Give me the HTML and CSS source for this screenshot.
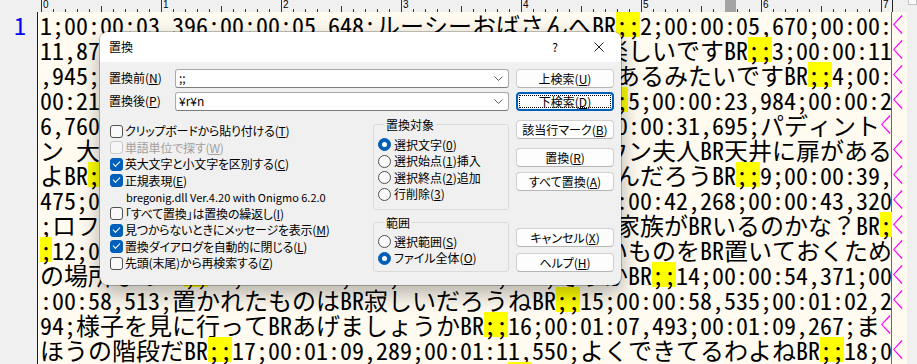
FILE: index.html
```html
<!DOCTYPE html>
<html lang="ja">
<head>
  <meta charset="UTF-8">
  <title>置換</title>
  <link rel="stylesheet" href="styles.css">
</head>
<body>
  <div class="window">
    <div class="ruler-row">
      <div class="ruler-gutter"></div>
      <div class="ruler">
        <span class="ruler-num">0</span>
        <span class="ruler-num">1</span>
        <span class="ruler-num">2</span>
        <span class="ruler-num">3</span>
        <span class="ruler-num">4</span>
        <span class="ruler-num">5</span>
        <span class="ruler-num">6</span>
        <span class="ruler-num">7</span>
        <span class="ruler-cursor"></span>
      </div>
      <div class="ruler-rest"><span class="scroll-cap"></span></div>
    </div>

    <div class="edit-row">
      <div class="gutter">1</div>
      <div class="text">
        <div class="line">1;00:00:03,396;00:00:05,648;ルーシーおばさんへBR<span class="hl">;;</span>2;00:00:05,670;00:00:<span class="wrap"></span></div>
        <div class="line">11,875;ロンドンの暮らしはブラウンさん一家といて楽しいですBR<span class="hl">;;</span>3;00:00:11<span class="wrap"></span></div>
        <div class="line">,945;00:00:14,118;この家には秘密の部屋がたくさんあるみたいですBR<span class="hl">;;</span>4;00:<span class="wrap"></span></div>
        <div class="line">00:21,453;00:00:22,870;屋根裏に何があるのかなBR<span class="hl">;;</span>5;00:00:23,984;00:00:2<span class="wrap"></span></div>
        <div class="line">6,760;屋根裏へ行ってみようよBR<span class="hl">;;</span>6;00:00:28,112;00:00:31,695;パディント<span class="wrap"></span></div>
        <div class="line">ン 大きいねBR<span class="hl">;;</span>7;00:00:32,100;00:00:35,420;ブラウン夫人BR天井に扉がある<span class="wrap"></span></div>
        <div class="line">よBR<span class="hl">;;</span>8;00:00:35,500;00:00:38,990;上には何があるんだろうBR<span class="hl">;;</span>9;00:00:39,<span class="wrap"></span></div>
        <div class="line">475;00:00:41,200;ここから屋根裏に行けるBR<span class="hl">;;</span>10;00:00:42,268;00:00:43,320<span class="wrap"></span></div>
        <div class="line">;ロフトには もしかしたら小さなネズミさんの仲間の家族がBRいるのかな？BR<span class="hl">;</span><span class="wrap"></span></div>
        <div class="line"><span class="hl">;</span>12;00:00:46,100;00:00:50,300;屋根裏は 使ってないものをBR置いておくため<span class="wrap"></span></div>
        <div class="line">の場所なのBR<span class="hl">;;</span>13;00:00:50,500;00:00:53,900;そうかBR<span class="hl">;;</span>14;00:00:54,371;00<span class="wrap"></span></div>
        <div class="line">:00:58,513;置かれたものはBR寂しいだろうねBR<span class="hl">;;</span>15;00:00:58,535;00:01:02,2<span class="wrap"></span></div>
        <div class="line">94;様子を見に行ってBRあげましょうかBR<span class="hl">;;</span>16;00:01:07,493;00:01:09,267;ま<span class="wrap"></span></div>
        <div class="line">ほうの階段だBR<span class="hl">;;</span>17;00:01:09,289;00:01:11,550;よくできてるわよねBR<span class="hl">;;</span>18;0<span class="wrap"></span></div>
        <div class="line">0:01:12,001;00:01:14,010;ありがとうねBR<span class="hl">;;</span>19;00:01:14,500;00:01:16,800;<span class="wrap"></span></div>
      </div>
      <div class="vscroll"></div>
    </div>

    <div class="dialog">
      <div class="titlebar">
        <span class="title">置換</span>
        <span class="title-btn">?</span>
        <span class="title-btn">
          <svg width="10" height="10" viewBox="0 0 10 10"><path d="M0.5 0.5L9.5 9.5M9.5 0.5L0.5 9.5" stroke="#1a1a1a" stroke-width="1" fill="none"/></svg>
        </span>
      </div>

      <div class="dialog-body">
        <div class="main">
          <div class="field">
            <span class="field-label">置換前(<u>N</u>)</span>
            <div class="combo">
              <span class="combo-value">;;</span>
              <svg width="9" height="5" viewBox="0 0 9 5"><path d="M0.5 0.5L4.5 4.5L8.5 0.5" stroke="#5c5c5c" fill="none"/></svg>
            </div>
          </div>
          <div class="field">
            <span class="field-label">置換後(<u>P</u>)</span>
            <div class="combo">
              <span class="combo-value">¥r¥n</span>
              <svg width="9" height="5" viewBox="0 0 9 5"><path d="M0.5 0.5L4.5 4.5L8.5 0.5" stroke="#5c5c5c" fill="none"/></svg>
            </div>
          </div>

          <div class="options">
            <div class="checks">
              <div class="check"><span class="box"></span>クリップボードから貼り付ける(<u>T</u>)</div>
              <div class="check disabled"><span class="box"></span>単語単位で探す(<u>W</u>)</div>
              <div class="check"><span class="box on"></span>英大文字と小文字を区別する(<u>C</u>)</div>
              <div class="check"><span class="box on"></span>正規表現(<u>E</u>)</div>
              <div class="check note">bregonig.dll Ver.4.20 with Onigmo 6.2.0</div>
              <div class="check"><span class="box"></span>「すべて置換」は置換の繰返し(<u>I</u>)</div>
              <div class="check"><span class="box on"></span>見つからないときにメッセージを表示(<u>M</u>)</div>
              <div class="check"><span class="box on"></span>置換ダイアログを自動的に閉じる(<u>L</u>)</div>
              <div class="check"><span class="box"></span>先頭(末尾)から再検索する(<u>Z</u>)</div>
            </div>

            <div class="groups">
              <fieldset class="group">
                <legend>置換対象</legend>
                <div class="radio-row"><span class="radio on"></span>選択文字(<u>0</u>)</div>
                <div class="radio-row"><span class="radio"></span>選択始点(<u>1</u>)挿入</div>
                <div class="radio-row"><span class="radio"></span>選択終点(<u>2</u>)追加</div>
                <div class="radio-row"><span class="radio"></span>行削除(<u>3</u>)</div>
              </fieldset>
              <fieldset class="group group-range">
                <legend>範囲</legend>
                <div class="radio-row"><span class="radio"></span>選択範囲(<u>S</u>)</div>
                <div class="radio-row"><span class="radio on"></span>ファイル全体(<u>O</u>)</div>
              </fieldset>
            </div>
          </div>
        </div>

        <div class="side">
          <div class="btn">上検索(<u>U</u>)</div>
          <div class="btn focused gap-4">下検索(<u>D</u>)</div>
          <div class="btn gap-9">該当行マーク(<u>B</u>)</div>
          <div class="btn gap-9">置換(<u>R</u>)</div>
          <div class="btn gap-5">すべて置換(<u>A</u>)</div>
          <div class="btn gap-37">キャンセル(<u>X</u>)</div>
          <div class="btn gap-6">ヘルプ(<u>H</u>)</div>
        </div>
      </div>
    </div>
  </div>
</body>
</html>
```

FILE: styles.css
```css
body {
  margin: 0;
  background: #f0f0f0;
}

.window {
  position: relative;
  width: 917px;
  height: 364px;
  overflow: hidden;
  background: #f0f0f0;
}

/* ruler */
.ruler-row {
  display: flex;
  height: 12px;
}

.ruler-gutter {
  width: 41px;
}

.ruler {
  position: relative;
  display: flex;
  width: 851px;
  overflow: hidden;
  border-right: 1px solid #222;
  background:
    repeating-linear-gradient(to right, #333 0 1px, transparent 1px 120px) 0 0 / 100% 100% no-repeat,
    repeating-linear-gradient(to right, transparent 0 60px, #333 60px 61px, transparent 61px 120px) 0 100% / 100% 6px no-repeat,
    repeating-linear-gradient(to right, #333 0 1px, transparent 1px 12px) 0 100% / 100% 3px no-repeat;
}

.ruler-num {
  flex: none;
  width: 120px;
  padding-left: 2px;
  box-sizing: border-box;
  font: 10px/10px "Liberation Sans", sans-serif;
  color: #000;
}

.ruler-cursor {
  position: absolute;
  left: 684px;
  top: 0;
  width: 11px;
  height: 12px;
  background: #a4a4a4;
}

.ruler-rest {
  flex: 1;
  position: relative;
}

.scroll-cap {
  position: absolute;
  right: 0;
  top: 0;
  width: 7px;
  height: 4px;
  background: #fbfbfb;
  border: 1px solid #c4c4c4;
  border-top: 0;
}

/* editor */
.edit-row {
  display: flex;
  height: 352px;
}

.gutter {
  width: 38px;
  box-sizing: border-box;
  padding-right: 11px;
  border-right: 1px solid #0000ff;
  text-align: right;
  color: #0000ff;
  font: 24px/25px "Noto Sans Mono CJK JP", "Noto Sans CJK JP", monospace;
}

.text {
  width: 869px;
  box-sizing: border-box;
  padding-left: 2px;
  overflow: hidden;
  background: linear-gradient(#ff00ff, #ff00ff) 853px 0 / 1px 100% no-repeat, #fffbf0;
  color: #000;
  font: 24px/25px "Noto Sans Mono CJK JP", "Noto Sans CJK JP", monospace;
}

.line {
  height: 25px;
  white-space: pre;
}

.hl {
  display: inline-block;
  height: 25px;
  vertical-align: top;
  background: #ffff00;
}

.wrap {
  display: inline-block;
  width: 12px;
  height: 25px;
  vertical-align: top;
  background: #ff00ff;
  clip-path: polygon(9.6px 3px, 10.6px 4px, 2.4px 12.5px, 10.6px 21px, 9.6px 22px, 1px 12.5px);
}

.vscroll {
  flex: 1;
  background: #f0f0f0;
}

/* dialog */
.dialog {
  position: absolute;
  left: 100px;
  top: 32px;
  width: 521px;
  height: 253px;
  overflow: hidden;
  background: #f0f0f0;
  border-radius: 8px;
  box-shadow: 0 0 0 1px rgba(0, 0, 0, 0.22), 0 8px 22px rgba(0, 0, 0, 0.32);
  color: #000;
  font: 12px/16.5px "Noto Sans CJK JP", sans-serif;
  font-feature-settings: "palt";
}

.titlebar {
  display: flex;
  align-items: center;
  height: 30px;
  padding-left: 9px;
  background: #fff;
}

.title {
  flex: 1;
}

.title-btn {
  display: flex;
  justify-content: center;
  align-items: center;
  width: 44px;
  font-size: 12px;
}

.dialog-body {
  display: flex;
  gap: 7px;
  padding: 7px 7px 0 9px;
}

.main {
  width: 400px;
}

.field {
  display: flex;
  align-items: center;
  height: 19px;
}

.field + .field {
  margin-top: 4px;
}

.field-label {
  width: 66px;
}

.combo {
  flex: 1;
  display: flex;
  align-items: center;
  height: 19px;
  box-sizing: border-box;
  padding: 0 5px 0 3px;
  background: #fff;
  border: 1px solid #a9a9a9;
  border-bottom-color: #7c7c7c;
  border-radius: 3px;
}

.combo-value {
  flex: 1;
}

.options {
  display: flex;
  margin-top: 6px;
}

.checks {
  width: 264px;
  padding-top: 6px;
  letter-spacing: -0.2px;
}

.check {
  display: flex;
  align-items: center;
  height: 16.5px;
}

.check.disabled {
  color: #a0a0a0;
}

.check.note {
  padding-left: 17px;
  font-size: 11px;
  letter-spacing: 0;
}

.box {
  width: 13px;
  height: 13px;
  margin: 0 2px 0 1px;
  box-sizing: border-box;
  border: 1px solid #505050;
  border-radius: 3px;
  background: #f9f9f9;
}

.disabled .box {
  border-color: #c8c8c8;
  background: #f6f6f6;
}

.box.on {
  border-color: #005fb8;
  background: #005fb8;
}

.box.on::after {
  content: "";
  display: block;
  width: 6px;
  height: 3px;
  margin: 2px 0 0 2px;
  border-left: 1.3px solid #fff;
  border-bottom: 1.3px solid #fff;
  transform: rotate(-45deg);
}

.groups {
  width: 136px;
}

.group {
  margin: 0;
  padding: 4.5px 0 6px 4px;
  min-width: 0;
  border: 1px solid #dadada;
  border-radius: 3px;
}

.group legend {
  margin-left: 6px;
  padding: 0 2px;
  line-height: 15px;
}

.group-range {
  margin-top: 5.5px;
  padding-top: 3.5px;
  padding-bottom: 4px;
}

.radio-row {
  display: flex;
  align-items: center;
  height: 16.5px;
  white-space: nowrap;
}

.radio {
  width: 13px;
  height: 13px;
  margin-right: 3px;
  box-sizing: border-box;
  border: 1px solid #505050;
  border-radius: 50%;
  background: #f9f9f9;
}

.radio.on {
  border-color: #005fb8;
  background: #005fb8;
}

.radio.on::after {
  content: "";
  display: block;
  width: 5px;
  height: 5px;
  margin: 3px;
  border-radius: 50%;
  background: #fff;
}

.side {
  display: flex;
  flex-direction: column;
  width: 98px;
}

.btn {
  height: 19px;
  box-sizing: border-box;
  border: 1px solid #d0d0d0;
  border-bottom-color: #b5b5b5;
  border-radius: 4px;
  background: #fdfdfd;
  text-align: center;
  line-height: 17px;
}

.btn.focused {
  border: 2px solid #005fb8;
  line-height: 15px;
  outline: 1px dotted #000;
  outline-offset: -4px;
}

.gap-4 { margin-top: 4px; }
.gap-5 { margin-top: 5px; }
.gap-6 { margin-top: 6px; }
.gap-9 { margin-top: 9px; }
.gap-37 { margin-top: 37px; }
```
